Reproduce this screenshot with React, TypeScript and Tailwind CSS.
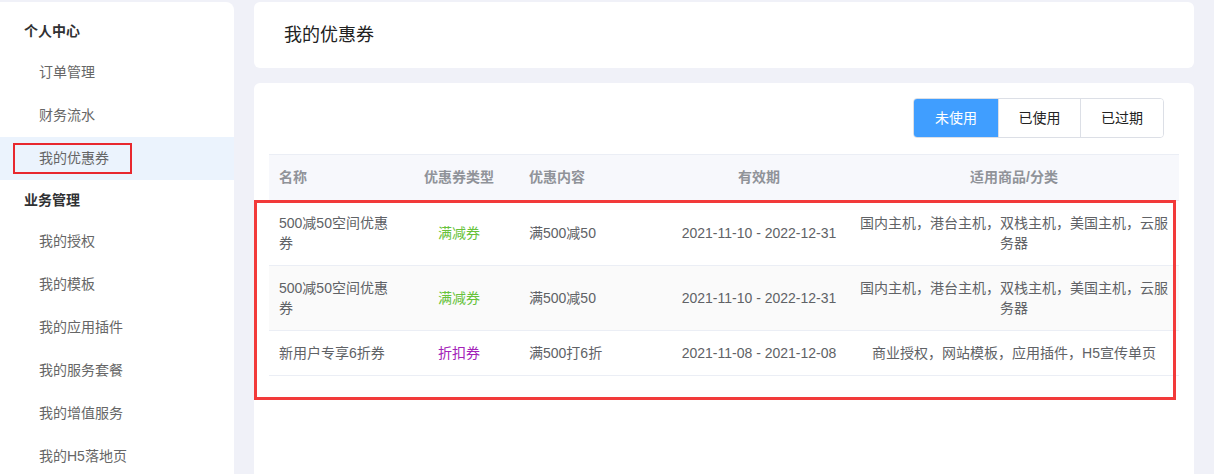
import React from 'react'

const font = '"Liberation Sans", "Noto Sans CJK SC", sans-serif'

type NavItem = { label: string; heading?: boolean; active?: boolean }

const navItems: NavItem[] = [
  { label: '个人中心', heading: true },
  { label: '订单管理' },
  { label: '财务流水' },
  { label: '我的优惠券', active: true },
  { label: '业务管理', heading: true },
  { label: '我的授权' },
  { label: '我的模板' },
  { label: '我的应用插件' },
  { label: '我的服务套餐' },
  { label: '我的增值服务' },
  { label: '我的H5落地页' },
]

type Coupon = {
  name: string
  type: string
  typeColor: string
  content: string
  period: string
  scope: string
}

const coupons: Coupon[] = [
  {
    name: '500减50空间优惠券',
    type: '满减券',
    typeColor: 'text-[#67c23a]',
    content: '满500减50',
    period: '2021-11-10 - 2022-12-31',
    scope: '国内主机，港台主机，双栈主机，美国主机，云服务器',
  },
  {
    name: '500减50空间优惠券',
    type: '满减券',
    typeColor: 'text-[#67c23a]',
    content: '满500减50',
    period: '2021-11-10 - 2022-12-31',
    scope: '国内主机，港台主机，双栈主机，美国主机，云服务器',
  },
  {
    name: '新用户专享6折券',
    type: '折扣券',
    typeColor: 'text-[#a321b8]',
    content: '满500打6折',
    period: '2021-11-08 - 2021-12-08',
    scope: '商业授权，网站模板，应用插件，H5宣传单页',
  },
]

const cols = 'grid grid-cols-[130px_120px_150px_180px_330px]'

const Sidebar = () => (
  <div className="w-[234px] shrink-0 bg-white rounded-tr-lg pt-[9px] h-[600px]">
    {navItems.map((item, i) =>
      item.heading ? (
        <div
          key={i}
          className="h-[40px] flex items-center pl-[24px] text-[14px] font-bold text-[#303133]"
        >
          {item.label}
        </div>
      ) : (
        <div
          key={i}
          className={`relative h-[43px] flex items-center pl-[39px] text-[14px] text-[#666] ${
            item.active ? 'bg-[#ebf3fd]' : ''
          }`}
        >
          {item.label}
          {item.active && (
            <div className="absolute left-[13px] top-[6px] w-[119px] h-[31px] border-2 border-[#e8282e]" />
          )}
        </div>
      ),
    )}
  </div>
)

const Tabs = () => {
  const tabs = [
    { label: '未使用', w: 'w-[84px]' },
    { label: '已使用', w: 'w-[82px]' },
    { label: '已过期', w: 'w-[83px]' },
  ]
  return (
    <div className="flex justify-end pr-[15px]">
      <div className="flex h-[40px] rounded-[4px] border border-[#dcdfe6] overflow-hidden">
        {tabs.map((t, i) => (
          <div
            key={t.label}
            className={`${t.w} flex items-center justify-center text-[14px] ${
              i === 0
                ? 'bg-[#409eff] text-white'
                : 'bg-white text-[#222] border-l border-[#dcdfe6]'
            }`}
          >
            {t.label}
          </div>
        ))}
      </div>
    </div>
  )
}

const CouponTable = () => (
  <div className="relative mt-[16px]">
    <div
      className={`${cols} h-[47px] items-center bg-[#f7f8fc] border-t border-b border-[#ebeef5] text-[14px] font-bold text-[#909399]`}
    >
      <div className="px-[10px]">名称</div>
      <div className="px-[10px] text-center">优惠券类型</div>
      <div className="px-[10px]">优惠内容</div>
      <div className="px-[10px] text-center">有效期</div>
      <div className="px-[10px] text-center">适用商品/分类</div>
    </div>
    {coupons.map((c, i) => (
      <div
        key={i}
        className={`${cols} items-center py-[12px] border-b border-[#ebeef5] text-[14px] leading-[20px] text-[#606266] ${
          i === 1 ? 'bg-[#fafafa]' : 'bg-white'
        }`}
      >
        <div className="px-[10px]">{c.name}</div>
        <div className={`px-[10px] text-center ${c.typeColor}`}>{c.type}</div>
        <div className="px-[10px]">{c.content}</div>
        <div className="px-[10px] text-center">{c.period}</div>
        <div className="px-[10px] text-center">{c.scope}</div>
      </div>
    ))}
    <div className="absolute left-[-15px] top-[46px] w-[922px] h-[200px] border-[3px] border-[#f23a3a]" />
  </div>
)

const App = () => {
  return (
    <div
      className="w-[1214px] h-[474px] overflow-hidden bg-[#f0f1f8] flex items-start gap-[20px] pt-[2px]"
      style={{ fontFamily: font }}
    >
      <Sidebar />
      <div className="w-[940px] shrink-0 flex flex-col gap-[15px]">
        <div className="h-[66px] shrink-0 bg-white rounded-md flex items-center pl-[30px] text-[18px] text-[#222]">
          我的优惠券
        </div>
        <div className="h-[600px] shrink-0 bg-white rounded-md px-[15px] pt-[15px]">
          <Tabs />
          <CouponTable />
        </div>
      </div>
    </div>
  )
}

export default App
